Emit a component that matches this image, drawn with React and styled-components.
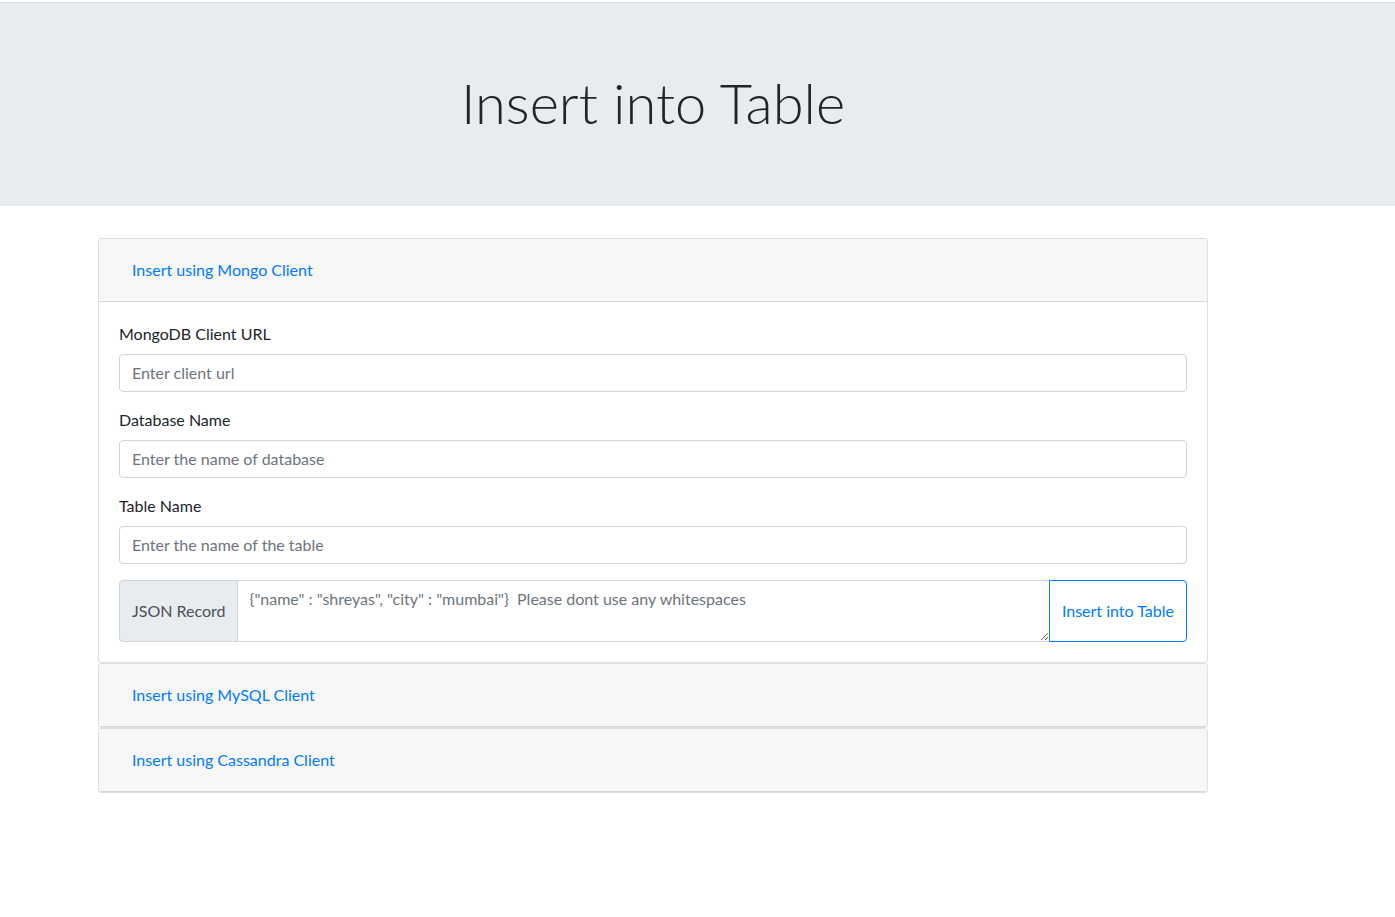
import React from 'react';
import styled, { createGlobalStyle } from 'styled-components';

const GlobalStyle = createGlobalStyle`
  * { box-sizing:border-box; }
  body {
    margin:0;
    background:#fff;
    color:#212529;
    font-family:"Segoe UI", Lato, "Noto Sans", sans-serif;
    font-size:16px;
    line-height:1.5;
  }
`;

const Page = styled.div`
  padding-top:2px;
`;

const Jumbotron = styled.div`
  background-color:#e9ecef;
  border-top:1px solid #dcdee1;
  padding:66px 0 70px;
  margin-bottom:32px;
`;

const Container = styled.div`
  width:1140px;
  margin-left:83px;
  padding:0 15px;
`;

const Title = styled.h1`
  margin:0;
  font-size:56px;
  font-weight:300;
  line-height:67px;
  text-align:center;
  color:#212529;
`;

const Card = styled.div`
  background:#fff;
  border:1px solid rgba(0,0,0,.125);
  border-radius:4px;
  overflow:hidden;
`;

const CardHeader = styled.div`
  background-color:#f7f7f7;
  padding:12px 20px;
  border-bottom:1px solid rgba(0,0,0,.125);
`;

const LinkButton = styled.button`
  font:inherit;
  background:none;
  border:1px solid transparent;
  color:#007bff;
  padding:6px 12px;
  line-height:24px;
  cursor:pointer;
`;

const CardBody = styled.div`
  padding:20px;
`;

const FormGroup = styled.div`
  margin-bottom:16px;
`;

const Label = styled.label`
  display:block;
  margin-bottom:8px;
  line-height:24px;
`;

const Input = styled.input`
  display:block;
  width:100%;
  height:38px;
  padding:5px 12px 7px;
  font:inherit;
  color:#495057;
  border:1px solid #ced4da;
  border-radius:4px;
  &::placeholder { color:#6c757d; }
`;

const InputGroup = styled.div`
  display:flex;
  align-items:stretch;
`;

const Prepend = styled.span`
  display:flex;
  align-items:center;
  padding:6px 11px 6px 12px;
  background:#e9ecef;
  color:#495057;
  border:1px solid #ced4da;
  border-radius:4px 0 0 4px;
  white-space:nowrap;
`;

const TextArea = styled.textarea`
  flex:1;
  height:62px;
  margin-left:-1px;
  padding:6px 12px;
  font:inherit;
  line-height:24px;
  color:#495057;
  border:1px solid #ced4da;
  border-radius:0;
  &::placeholder { color:#6c757d; }
`;

const OutlineButton = styled.button`
  margin-left:-1px;
  padding:6px 12px;
  font:inherit;
  color:#007bff;
  background:#fff;
  border:1px solid #007bff;
  border-radius:0 4px 4px 0;
  position:relative;
  cursor:pointer;
`;

const fields = [
  { label: 'MongoDB Client URL', placeholder: 'Enter client url' },
  { label: 'Database Name', placeholder: 'Enter the name of database' },
  { label: 'Table Name', placeholder: 'Enter the name of the table' },
];

const App = () => {
  return (
    <>
      <GlobalStyle />
      <Page>
        <Jumbotron>
          <Container>
            <Title>Insert into Table</Title>
          </Container>
        </Jumbotron>
        <Container>
          <Card>
            <CardHeader>
              <LinkButton>Insert using Mongo Client</LinkButton>
            </CardHeader>
            <CardBody>
              {fields.map(f => (
                <FormGroup key={f.label}>
                  <Label>{f.label}</Label>
                  <Input placeholder={f.placeholder} />
                </FormGroup>
              ))}
              <InputGroup>
                <Prepend>JSON Record</Prepend>
                <TextArea placeholder={'{"name" : "shreyas", "city" : "mumbai"}  Please dont use any whitespaces'} />
                <OutlineButton>Insert into Table</OutlineButton>
              </InputGroup>
            </CardBody>
          </Card>
          <Card>
            <CardHeader>
              <LinkButton>Insert using MySQL Client</LinkButton>
            </CardHeader>
          </Card>
          <Card>
            <CardHeader>
              <LinkButton>Insert using Cassandra Client</LinkButton>
            </CardHeader>
          </Card>
        </Container>
      </Page>
    </>
  );
};

export default App;
